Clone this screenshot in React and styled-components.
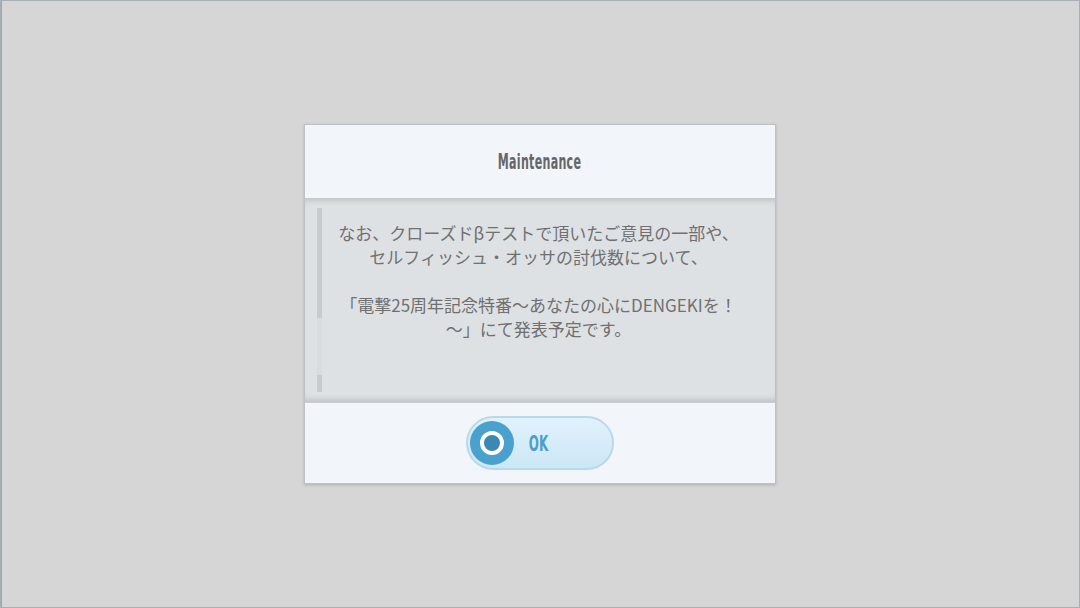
import React from "react";
import styled, { createGlobalStyle } from "styled-components";

const GlobalStyle = createGlobalStyle`
  html, body {
    margin: 0;
    padding: 0;
    background: #d6d6d6;
  }
`;

const Screen = styled.div`
  width: 1080px;
  height: 608px;
  box-sizing: border-box;
  border: 1px solid #a9aebb;
  box-shadow: inset 1px 0 0 #9ca3b4;
  background: #d6d6d6;
  display: flex;
  align-items: center;
  justify-content: center;
`;

const Dialog = styled.div`
  width: 472px;
  box-sizing: border-box;
  display: flex;
  flex-direction: column;
  border: 1px solid #bfc1c3;
  box-shadow: 0 1px 3px rgba(0, 0, 0, 0.18);
  background: #f2f5fa;
`;

const Header = styled.div`
  height: 73px;
  display: flex;
  align-items: center;
  justify-content: center;
  background: #f2f5fa;
`;

// condensed display lettering, squeezed from a bold sans
const Condensed = styled.span`
  display: inline-block;
  font-family: "DejaVu Sans Condensed", Roboto, sans-serif;
  font-weight: 700;
  font-size: ${({ size }) => size}px;
  color: ${({ color }) => color};
  transform: scaleX(${({ squeeze }) => squeeze});
  letter-spacing: 0.5px;
`;

const Body = styled.div`
  height: 204px;
  display: flex;
  background: #dee1e4;
  box-shadow: inset 0 7px 6px -5px rgba(0, 0, 0, 0.16),
    inset 0 -7px 6px -5px rgba(0, 0, 0, 0.16);
  border-bottom: 1px solid #c9ccd0;
`;

const ScrollTrack = styled.div`
  width: 5px;
  margin: 10px 0 10px 12px;
  background: #c8cbce;
  display: flex;
  flex-direction: column;
`;

const ScrollPart = styled.div`
  height: ${({ h }) => h}px;
  background: ${({ light }) => (light ? "#d9dcdf" : "#c8cbce")};
`;

const Message = styled.div`
  flex: 1;
  padding: 23px 20px 0 0;
  font-family: "Noto Sans CJK JP", "Noto Sans", sans-serif;
  font-size: 17px;
  line-height: 24px;
  color: #707070;
  text-align: center;
`;

const Line = styled.div`
  min-height: 24px;
  white-space: nowrap;
`;

const Footer = styled.div`
  height: 80px;
  display: flex;
  align-items: center;
  justify-content: center;
  background: #f2f5fa;
`;

const OkButton = styled.button`
  width: 148px;
  height: 54px;
  box-sizing: border-box;
  border-radius: 27px;
  border: 2px solid #b7d9ec;
  background: linear-gradient(#e0f2fc, #cde7f5);
  padding: 0 0 0 2px;
  display: flex;
  align-items: center;
  gap: 8px;
  cursor: pointer;
`;

const Badge = styled.div`
  width: 44px;
  height: 44px;
  border-radius: 50%;
  background: #4aa1cd;
  display: flex;
  align-items: center;
  justify-content: center;
`;

const Ring = styled.div`
  width: 16px;
  height: 16px;
  border-radius: 50%;
  border: 4px solid #ffffff;
  background: #3a88b4;
`;

const lines = [
  "なお、クローズドβテストで頂いたご意見の一部や、",
  "セルフィッシュ・オッサの討伐数について、",
  "",
  "「電撃25周年記念特番～あなたの心にDENGEKIを！",
  "～」にて発表予定です。",
];

export default function App() {
  return (
    <>
      <GlobalStyle />
      <Screen>
        <Dialog>
          <Header>
            <Condensed size={22} squeeze={0.56} color="#676767">
              Maintenance
            </Condensed>
          </Header>
          <Body>
            <ScrollTrack>
              <ScrollPart h={110} />
              <ScrollPart h={57} light />
            </ScrollTrack>
            <Message>
              {lines.map((text, i) => (
                <Line key={i}>{text}</Line>
              ))}
            </Message>
          </Body>
          <Footer>
            <OkButton>
              <Badge>
                <Ring />
              </Badge>
              <Condensed size={22} squeeze={0.6} color="#4a9fcc">
                OK
              </Condensed>
            </OkButton>
          </Footer>
        </Dialog>
      </Screen>
    </>
  );
}
